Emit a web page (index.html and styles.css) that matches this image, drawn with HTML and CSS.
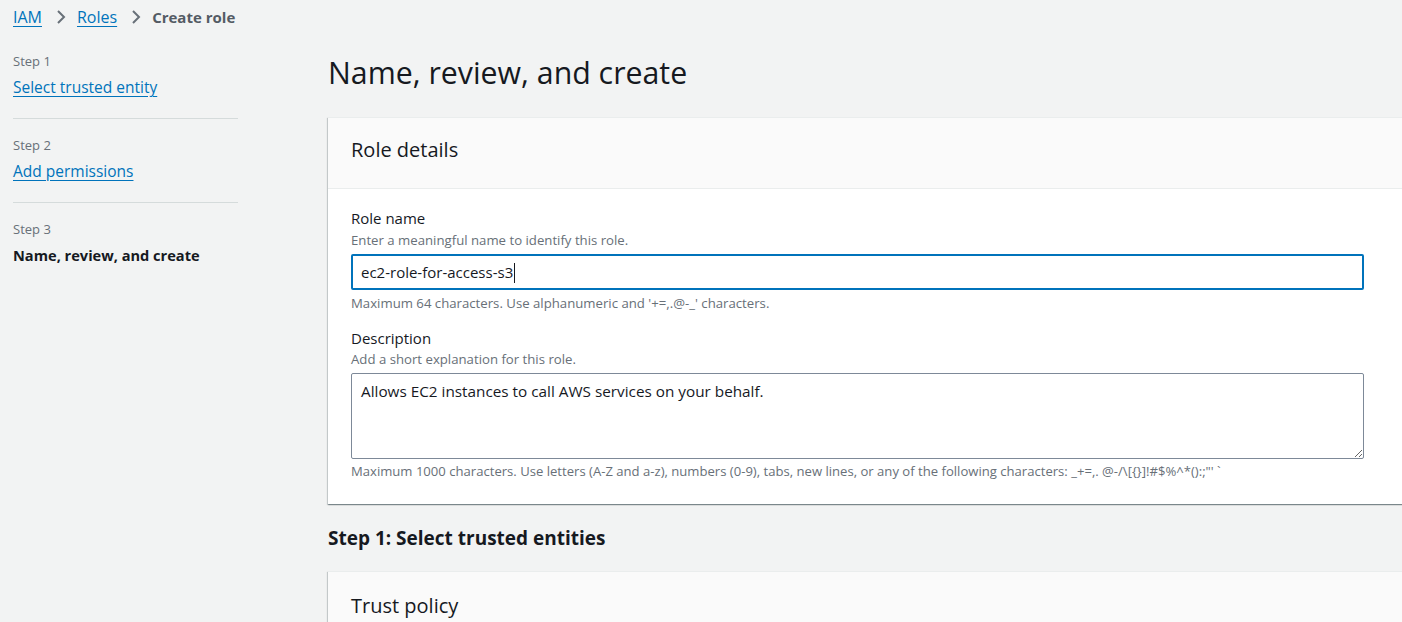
FILE: index.html
```html
<!DOCTYPE html>
<html lang="en">
<head>
<meta charset="utf-8">
<title>Create role</title>
<link rel="stylesheet" href="styles.css">
</head>
<body>
<div class="page">
  <nav class="crumbs">
    <a href="#" class="crumb-link">IAM</a>
    <svg class="chev" width="12" height="14" viewBox="0 0 12 14"><polyline points="3,1 9,7 3,13" fill="none" stroke="#687078" stroke-width="2"/></svg>
    <a href="#" class="crumb-link">Roles</a>
    <svg class="chev" width="12" height="14" viewBox="0 0 12 14"><polyline points="3,1 9,7 3,13" fill="none" stroke="#687078" stroke-width="2"/></svg>
    <span class="crumb-current">Create role</span>
  </nav>
  <div class="layout">
    <aside class="steps">
      <div class="step">
        <div class="step-num">Step 1</div>
        <a href="#" class="step-link">Select trusted entity</a>
      </div>
      <div class="step">
        <div class="step-num">Step 2</div>
        <a href="#" class="step-link">Add permissions</a>
      </div>
      <div class="step last">
        <div class="step-num">Step 3</div>
        <div class="step-current">Name, review, and create</div>
      </div>
    </aside>
    <main class="main">
      <h1 class="title">Name, review, and create</h1>
      <section class="card">
        <div class="card-head"><h2>Role details</h2></div>
        <div class="card-body">
          <div class="field">
            <label class="label">Role name</label>
            <div class="hint">Enter a meaningful name to identify this role.</div>
            <div class="input focused">ec2-role-for-access-s3<span class="caret"></span></div>
            <div class="hint after">Maximum 64 characters. Use alphanumeric and '+=,.@-_' characters.</div>
          </div>
          <div class="field second">
            <label class="label">Description</label>
            <div class="hint desc">Add a short explanation for this role.</div>
            <textarea class="textarea">Allows EC2 instances to call AWS services on your behalf.</textarea>
            <div class="hint after2">Maximum 1000 characters. Use letters (A-Z and a-z), numbers (0-9), tabs, new lines, or any of the following characters: _+=,. @-/\[{}]!#$%^*():;"' `</div>
          </div>
        </div>
      </section>
      <h2 class="section-title">Step 1: Select trusted entities</h2>
      <section class="card">
        <div class="card-head tp"><h2>Trust policy</h2></div>
      </section>
    </main>
  </div>
</div>
</body>
</html>
```
FILE: styles.css
```css
* { box-sizing: border-box; }
html, body { margin: 0; padding: 0; }
body {
  background: #f2f3f3;
  font-family: "Open Sans", "Noto Sans", sans-serif;
  color: #16191f;
  overflow: hidden;
  width: 1402px;
  height: 622px;
}
a { color: #0073bb; text-decoration: underline; text-underline-offset: 3px; }
.page { padding-left: 13px; }
.crumbs {
  display: flex;
  align-items: center;
  height: 34px;
  font-size: 16px;
}
.chev { margin: 0 10px 0 13px; }
.crumb-link { color: #0073bb; }
.crumb-current { color: #545b64; font-weight: 700; font-size: 15px; }
.layout {
  display: flex;
}
.steps {
  width: 225px;
  flex: none;
  padding-top: 19px;
}
.step {
  border-bottom: 1px solid #d5dbdb;
  padding-bottom: 21px;
  margin-bottom: 18px;
}
.step.last { border-bottom: none; }
.step-num {
  font-size: 13px;
  line-height: 16px;
  color: #687078;
  margin-bottom: 8px;
}
.step-link, .step-current {
  display: block;
  width: fit-content;
  font-size: 15.5px;
  line-height: 20px;
}
.step-current { font-weight: 700; font-size: 14.6px; }
.main {
  margin-left: 90px;
  width: 1100px;
  flex: none;
}
.title {
  margin: 21px 0 26px;
  font-size: 30.3px;
  line-height: 36px;
  font-weight: 400;
}
.card {
  background: #fff;
  box-shadow: 0 1px 1px 0 rgba(0,28,36,.3), 1px 1px 1px 0 rgba(0,28,36,.15), -1px 1px 1px 0 rgba(0,28,36,.15);
  border-top: 1px solid #eaeded;
}
.card-head {
  background: #fafafa;
  border-bottom: 1px solid #eaeded;
  padding: 21px 23px 27px;
}
.card-head h2 {
  margin: 0;
  font-size: 20px;
  line-height: 22px;
  font-weight: 400;
}
.card-head.tp { padding-top: 23px; }
.card-body {
  padding: 19px 23px 25px 23px;
}
.label {
  display: block;
  font-size: 15px;
  line-height: 20px;
}
.hint {
  font-size: 13.2px;
  line-height: 16px;
  color: #687078;
  margin-top: 4px;
}
.hint.desc { margin-top: 3px; }
.input {
  margin-top: 6px;
  width: 1013px;
  height: 36px;
  border: 2px solid #0073bb;
  border-radius: 2px;
  padding: 0 8px;
  font-size: 15px;
  line-height: 32px;
  color: #16191f;
}
.caret {
  display: inline-block;
  width: 1px;
  height: 20px;
  background: #16191f;
  vertical-align: -5px;
  margin-left: 1px;
}
.hint.after { margin-top: 5px; }
.field.second { margin-top: 17px; }
.textarea {
  display: block;
  margin-top: 6px;
  width: 1013px;
  height: 86px;
  border: 1px solid #7d8998;
  border-radius: 2px;
  padding: 6px 9px;
  font-family: inherit;
  font-size: 15.3px;
  line-height: 22px;
  color: #16191f;
  resize: vertical;
}
.hint.after2 { margin-top: 4px; font-size: 13.1px; }
.section-title {
  margin: 23px 0 22px;
  font-size: 19px;
  line-height: 22px;
  font-weight: 700;
}
```
